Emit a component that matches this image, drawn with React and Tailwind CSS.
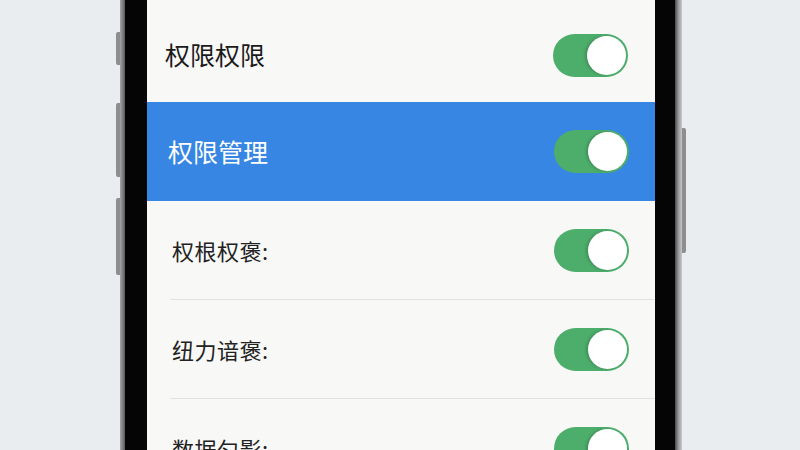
const font = { fontFamily: '"Noto Sans CJK SC", "Noto Sans", sans-serif' };

const Toggle = () => (
    <div className="w-[75px] h-[43px] rounded-full bg-[#4dae6c] p-[2px] flex justify-end shrink-0">
        <div className="w-[39px] h-[39px] rounded-full bg-white shadow-[-2px_0_3px_rgba(0,0,0,0.18)]" />
    </div>
)

const SettingRow = ({ label, divider }) => (
    <div className="h-[99px] shrink-0 flex flex-col">
        <div className="flex-1 flex items-center justify-between pl-[25px] pr-[26px]">
            <span className="text-[22px] text-[#222] tracking-[0.5px]">{label}</span>
            <Toggle />
        </div>
        {divider && <div className="ml-[23px] h-px bg-[#e2e2e0]" />}
    </div>
)

const Screen = () => (
    <div className="w-[508px] h-full overflow-hidden bg-[#f8f8f7] flex flex-col" style={font}>
        <div className="h-[102px] shrink-0 flex items-center justify-between pl-[18px] pr-[27px] pt-[8px]">
            <span className="text-[25px] text-[#1a1a1a]">权限权限</span>
            <Toggle />
        </div>
        <div className="h-[99px] shrink-0 bg-[#3786e3] flex items-center justify-between pl-[21px] pr-[26px]">
            <span className="text-[25px] text-white">权限管理</span>
            <Toggle />
        </div>
        <SettingRow label="权根权褒:" divider />
        <SettingRow label="纽力谙褒:" divider />
        <SettingRow label="数据匀影:" />
    </div>
)

export default function App() {
    return (
        <div className="w-[800px] h-[450px] overflow-hidden bg-[#e9edf0] flex pl-[116px]">
            <div className="relative flex h-full">
                <div className="w-[4px] flex flex-col">
                    <div className="h-[32px]" />
                    <div className="h-[33px] rounded-l-[2px] bg-[#8e8e90]" />
                    <div className="h-[38px]" />
                    <div className="h-[74px] rounded-l-[2px] bg-[#8e8e90]" />
                    <div className="h-[21px]" />
                    <div className="h-[77px] rounded-l-[2px] bg-[#8e8e90]" />
                </div>
                <div className="w-[5px] h-full bg-gradient-to-r from-[#a8a8aa] to-[#5a5a5c]" />
                <div className="w-[22px] h-full bg-[#050505]" />
                <Screen />
                <div className="w-[20px] h-full bg-[#050505]" />
                <div className="w-[7px] h-full bg-gradient-to-r from-[#4a4a4c] via-[#9a9a9c] to-[#c8c8ca]" />
                <div className="w-[4px] flex flex-col">
                    <div className="h-[128px]" />
                    <div className="h-[125px] rounded-r-[2px] bg-[#8e8e90]" />
                </div>
            </div>
        </div>
    );
}
